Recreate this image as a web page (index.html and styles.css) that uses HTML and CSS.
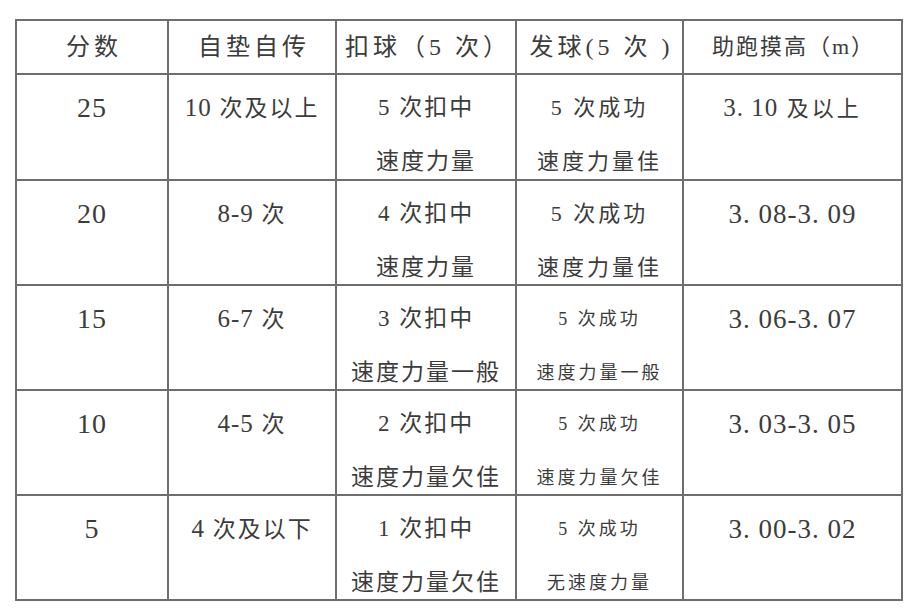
FILE: index.html
```html
<!DOCTYPE html>
<html lang="zh-CN">
<head>
<meta charset="utf-8">
<link rel="stylesheet" href="styles.css">
</head>
<body>
<div class="sheet">
  <div class="grid">
    <div class="cell head">分数</div>
    <div class="cell head">自垫自传</div>
    <div class="cell head">扣球（5 次）</div>
    <div class="cell head">发球(5 次 )</div>
    <div class="cell head small">助跑摸高（m）</div>

    <div class="cell"><div class="ln big">25</div></div>
    <div class="cell"><div class="ln"><span class="d">10</span> 次及以上</div></div>
    <div class="cell"><div class="ln">5 次扣中</div><div class="ln">速度力量</div></div>
    <div class="cell"><div class="ln mid">5 次成功</div><div class="ln mid">速度力量佳</div></div>
    <div class="cell"><div class="ln mid"><span class="d">3. 10</span> 及以上</div></div>

    <div class="cell"><div class="ln big">20</div></div>
    <div class="cell"><div class="ln"><span class="d">8-9</span> 次</div></div>
    <div class="cell"><div class="ln">4 次扣中</div><div class="ln">速度力量</div></div>
    <div class="cell"><div class="ln mid">5 次成功</div><div class="ln mid">速度力量佳</div></div>
    <div class="cell"><div class="ln num">3. 08-3. 09</div></div>

    <div class="cell"><div class="ln big">15</div></div>
    <div class="cell"><div class="ln"><span class="d">6-7</span> 次</div></div>
    <div class="cell"><div class="ln">3 次扣中</div><div class="ln">速度力量一般</div></div>
    <div class="cell"><div class="ln tiny">5 次成功</div><div class="ln tiny">速度力量一般</div></div>
    <div class="cell"><div class="ln num">3. 06-3. 07</div></div>

    <div class="cell"><div class="ln big">10</div></div>
    <div class="cell"><div class="ln"><span class="d">4-5</span> 次</div></div>
    <div class="cell"><div class="ln">2 次扣中</div><div class="ln">速度力量欠佳</div></div>
    <div class="cell"><div class="ln tiny">5 次成功</div><div class="ln tiny">速度力量欠佳</div></div>
    <div class="cell"><div class="ln num">3. 03-3. 05</div></div>

    <div class="cell"><div class="ln big">5</div></div>
    <div class="cell"><div class="ln"><span class="d">4</span> 次及以下</div></div>
    <div class="cell"><div class="ln">1 次扣中</div><div class="ln">速度力量欠佳</div></div>
    <div class="cell"><div class="ln tiny">5 次成功</div><div class="ln tiny">无速度力量</div></div>
    <div class="cell"><div class="ln num">3. 00-3. 02</div></div>
  </div>
</div>
</body>
</html>
```

FILE: styles.css
```css
html, body {
  margin: 0;
  padding: 0;
  background: #ffffff;
}

.sheet {
  width: 915px;
  height: 616px;
  padding: 19px 0 0 15px;
  box-sizing: border-box;
  font-family: "Liberation Serif", "Noto Sans CJK SC", serif;
  color: #3c3c3c;
}

.grid {
  display: grid;
  grid-template-columns: 152px 168px 180px 167px 219px;
  grid-template-rows: 54px 106px 105px 105px 105px 105px;
  border-top: 2px solid #6e6e6e;
  border-left: 2px solid #6e6e6e;
  width: max-content;
}

.cell {
  box-sizing: border-box;
  border-right: 2px solid #6e6e6e;
  border-bottom: 2px solid #6e6e6e;
  text-align: center;
  padding-top: 6px;
  font-size: 23px;
  letter-spacing: 2px;
  overflow: visible;
}

.head {
  padding-top: 0;
  line-height: 52px;
  font-size: 24px;
  letter-spacing: 4px;
  text-indent: 4px;
}

.head.small {
  font-size: 22px;
  letter-spacing: 2px;
  text-indent: 2px;
}

.ln {
  height: 54px;
  line-height: 54px;
  white-space: nowrap;
}

.big {
  font-size: 28px;
  letter-spacing: 1px;
}

.d {
  font-size: 25px;
  letter-spacing: 1px;
}

.mid {
  font-size: 22px;
  letter-spacing: 3px;
}

.tiny {
  font-size: 18px;
  letter-spacing: 3px;
}

.num {
  font-size: 27px;
  letter-spacing: 1px;
}
```
